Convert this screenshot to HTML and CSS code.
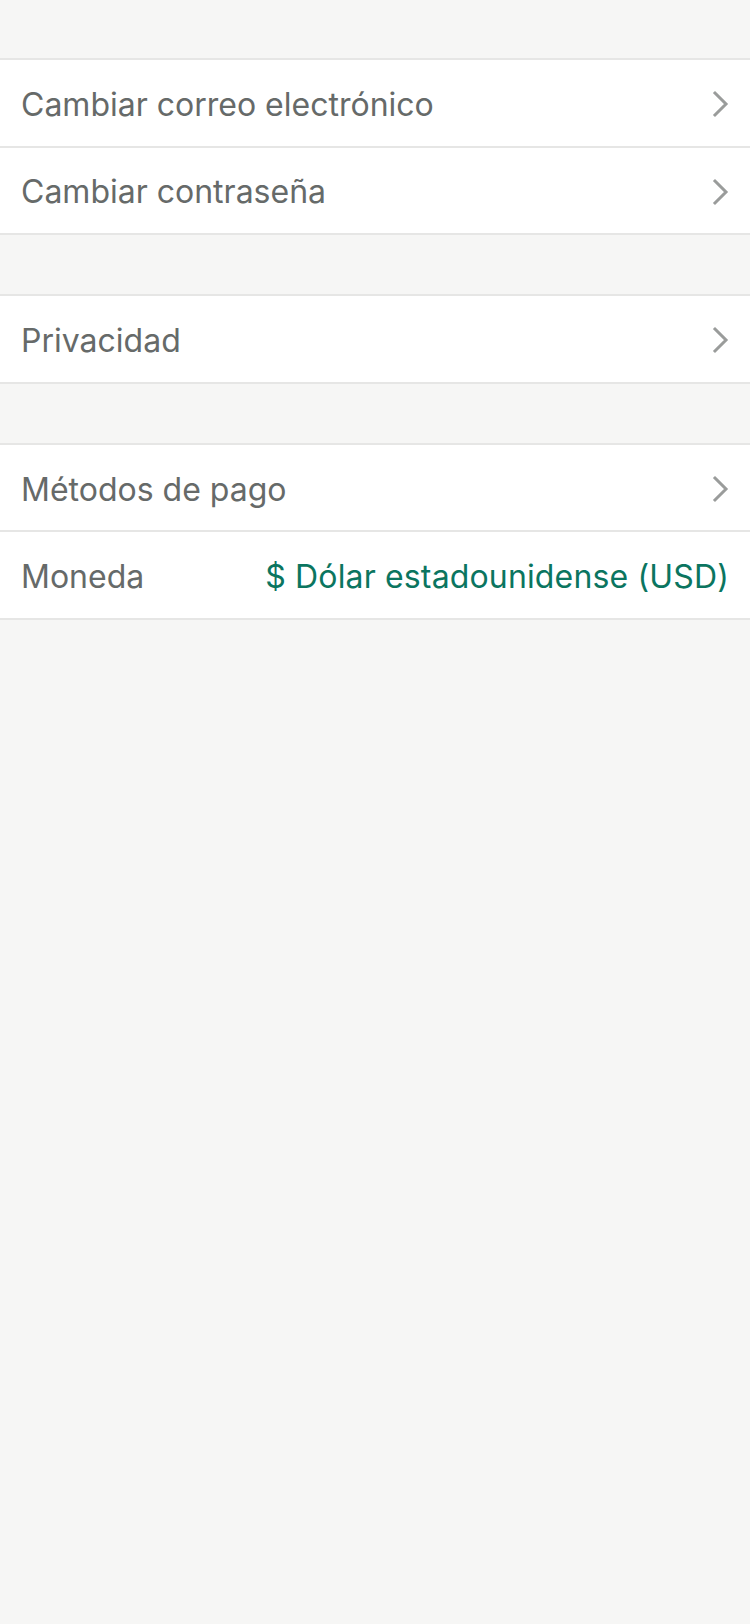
FILE: index.html
```html
<!DOCTYPE html>
<html lang="es">
<head>
<meta charset="utf-8">
<title>Cuenta</title>
<link rel="stylesheet" href="styles.css">
</head>
<body>
<main class="page">
  <section class="group">
    <div class="row"><span class="label">Cambiar correo electrónico</span><svg class="chev" viewBox="0 0 18 28"><path d="M3 3 L14 14 L3 25"/></svg></div>
    <div class="row"><span class="label">Cambiar contraseña</span><svg class="chev" viewBox="0 0 18 28"><path d="M3 3 L14 14 L3 25"/></svg></div>
  </section>
  <section class="group">
    <div class="row"><span class="label">Privacidad</span><svg class="chev" viewBox="0 0 18 28"><path d="M3 3 L14 14 L3 25"/></svg></div>
  </section>
  <section class="group">
    <div class="row"><span class="label">Métodos de pago</span><svg class="chev" viewBox="0 0 18 28"><path d="M3 3 L14 14 L3 25"/></svg></div>
    <div class="row"><span class="label">Moneda</span><span class="value">$ Dólar estadounidense (USD)</span></div>
  </section>
</main>
</body>
</html>
```
FILE: styles.css
```css
html, body {
  margin: 0;
  padding: 0;
  background: #f6f6f5;
}
body {
  font-family: Inter, "Noto Sans", sans-serif;
  width: 750px;
  min-height: 1624px;
}
.page {
  display: flex;
  flex-direction: column;
  gap: 59px;
  padding-top: 58px;
}
.group {
  background: #fff;
  border-top: 2px solid #e6e6e5;
}
.row {
  display: flex;
  align-items: center;
  justify-content: space-between;
  box-sizing: border-box;
  height: 87.6px;
  padding: 3px 20px 0 21px;
  border-bottom: 2px solid #e6e6e5;
}
.label {
  font-size: 32px;
  color: #666a69;
}
.value {
  font-size: 32px;
  color: #0b7560;
  margin-right: 1px;
  letter-spacing: 0.15px;
}
.chev {
  width: 18px;
  height: 28px;
  fill: none;
  stroke: #9a9c9b;
  stroke-width: 3px;
  stroke-linecap: square;
}
```
